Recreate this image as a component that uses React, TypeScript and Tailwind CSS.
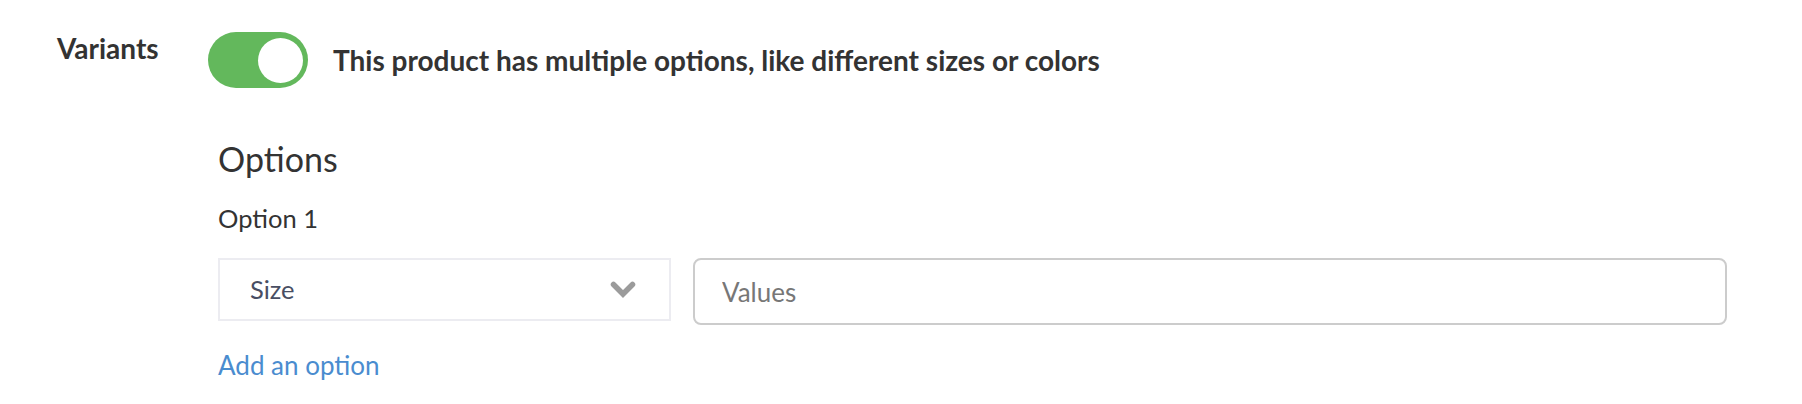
import { useState } from "react"

const FONT = { fontFamily: "Lato, 'Noto Sans', sans-serif" }

function Toggle({ on, onChange }: { on: boolean; onChange: (v: boolean) => void }) {
  return (
    <button
      type="button"
      onClick={() => onChange(!on)}
      className={`relative h-[56px] w-[100px] shrink-0 rounded-full transition ${on ? "bg-[#63b85c]" : "bg-[#d6d6d6]"}`}
    >
      <span
        className={`absolute top-[5.5px] h-[45px] w-[45px] rounded-full bg-white transition-all ${on ? "left-[50px]" : "left-[5px]"}`}
      />
    </button>
  )
}

function ChevronDown() {
  return (
    <svg width="26" height="17" viewBox="0 0 26 17" fill="none">
      <path
        d="M3.5 3.5 L13 13 L22.5 3.5"
        stroke="#9b9b9b"
        strokeWidth="5.5"
        strokeLinecap="round"
        strokeLinejoin="miter"
      />
    </svg>
  )
}

export default function App() {
  const [hasVariants, setHasVariants] = useState(true)

  return (
    <div className="min-h-[404px] w-full bg-white pl-[57px] pt-[32px] text-[#333333]" style={FONT}>
      <div className="flex items-start">
        <div className="w-[151px] shrink-0 text-[28px] font-bold leading-[32px]">Variants</div>

        <div className="flex-1">
          <div className="flex items-center gap-[25px]">
            <Toggle on={hasVariants} onChange={setHasVariants} />
            <p className="text-[28px] font-bold leading-[32px]">
              This product has multiple options, like different sizes or colors
            </p>
          </div>

          {hasVariants && (
            <div className="pl-[10px]">
              <h3 className="mt-[51px] text-[34px] leading-[40px]">Options</h3>
              <p className="mt-[24px] text-[25.5px] leading-[30px]">Option 1</p>

              <div className="mt-[25px] flex items-start gap-[22px]">
                <div className="flex h-[63px] w-[453px] shrink-0 items-center justify-between border-2 border-[#ececf1] pl-[30px] pr-[33px]">
                  <span className="text-[25.5px] text-[#484e63]">Size</span>
                  <ChevronDown />
                </div>
                <input
                  placeholder="Values"
                  className="h-[67px] w-[1034px] rounded-[8px] border-2 border-[#cccccc] pl-[27px] text-[26px] text-[#333333] outline-none placeholder:text-[#777777]"
                  style={FONT}
                />
              </div>

              <a href="#" className="mt-[25px] inline-block text-[26px] leading-[30px] text-[#4a8ccf]">
                Add an option
              </a>
            </div>
          )}
        </div>
      </div>
    </div>
  )
}
